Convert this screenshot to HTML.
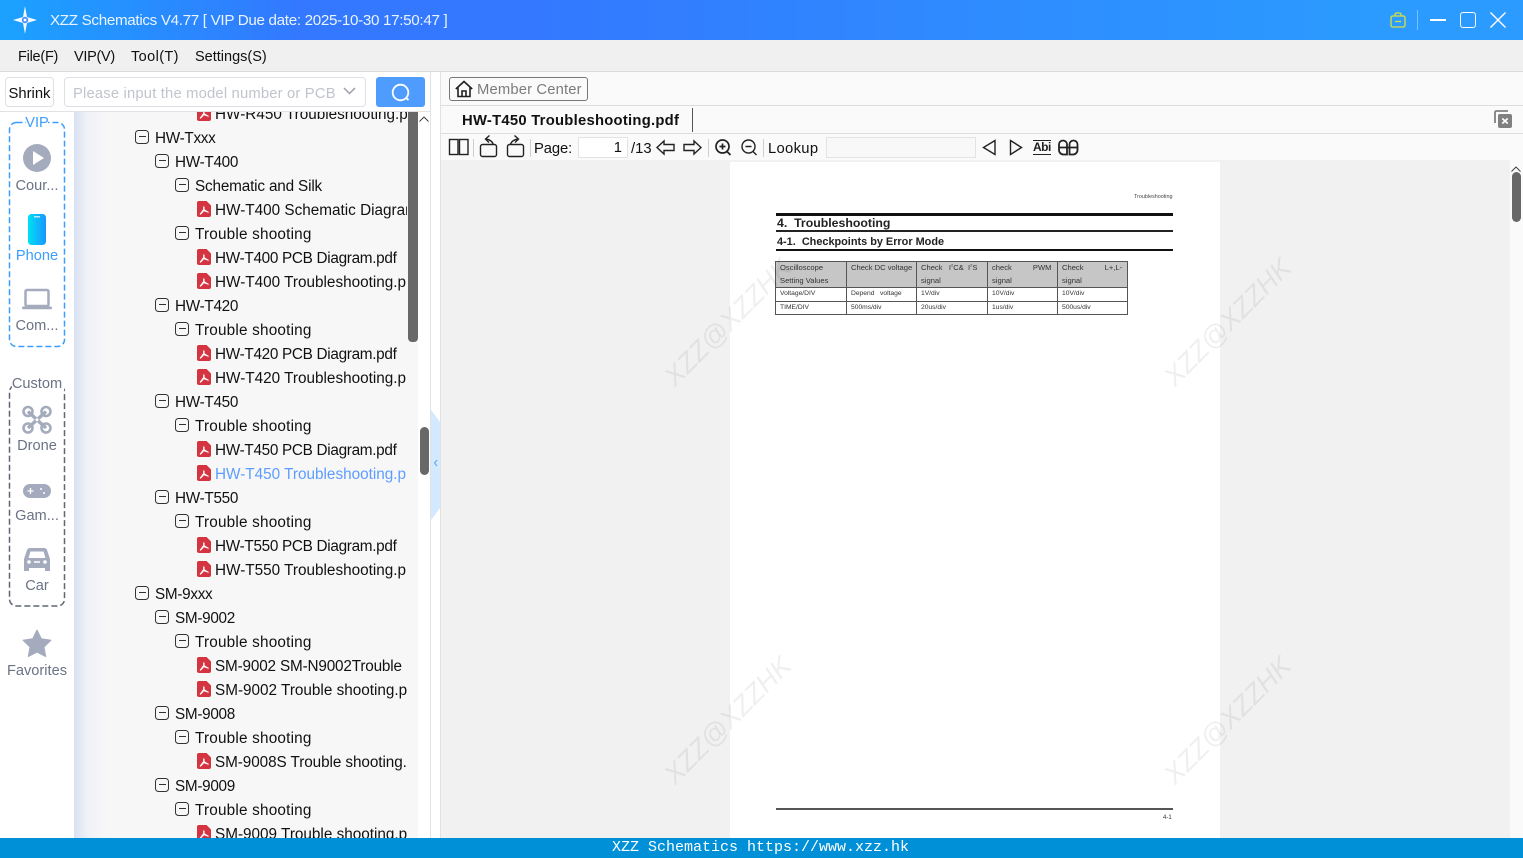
<!DOCTYPE html>
<html><head><meta charset="utf-8"><title>XZZ Schematics</title>
<style>
*{box-sizing:border-box}
html,body{margin:0;padding:0;width:1523px;height:858px;overflow:hidden;background:#fff;font-family:"Liberation Sans","Noto Sans CJK SC",sans-serif;color:#111}
.a{position:absolute;white-space:nowrap}
svg{position:absolute;overflow:visible}
#tree{position:absolute;left:74px;top:112px;width:344px;height:726px;background:linear-gradient(90deg,#d9e1f2 0,#f0f2f7 14px,#f7f7f7 34px);overflow:hidden}
.r{position:absolute;height:24px;line-height:24px;font-size:15.3px;white-space:nowrap;width:260px;overflow:hidden;color:#111;margin-top:2px;letter-spacing:-.3px}
.t{letter-spacing:.2px}
.s{letter-spacing:0}
.m{position:absolute;width:14px;height:14px;border:1.4px solid #333;border-radius:3.5px}
.m:after{content:"";position:absolute;left:2.5px;right:2.5px;top:5px;height:1.4px;background:#333}
.p{position:absolute;width:14px;height:16px;background:#d4343f;border-radius:2px;clip-path:polygon(0 0,68% 0,100% 28%,100% 100%,0 100%)}
.p:after{content:"";position:absolute;left:0;top:0;width:14px;height:16px;background:#fff;clip-path:polygon(18% 82%,44% 52%,44% 34%,54% 34%,54% 52%,84% 68%,82% 74%,50% 64%,26% 86%)}
.lab{position:absolute;width:74px;text-align:center;font-size:14.6px;color:#6b7285;left:0;margin-top:2px}
.wm{position:absolute;font-size:27px;font-style:italic;color:#000;opacity:.06;transform:rotate(-45deg);white-space:nowrap;width:200px;text-align:center}
table{position:absolute;left:775px;top:261px;width:352px;height:53px;border-collapse:collapse;font-size:6.7px;color:#333;table-layout:fixed}
td{border:1px solid #555;padding:0 4px;line-height:12.5px;vertical-align:middle;white-space:nowrap}
tr.h td{background:#c6c6c6;font-size:7.6px}
.ic{stroke:#222;stroke-width:1.4;fill:none}
.sep{position:absolute;top:139px;width:1px;height:18px;background:#cfcfcf}
</style></head>
<body>
<!-- Title bar -->
<div class="a" style="left:0;top:0;width:1523px;height:40px;background:linear-gradient(90deg,#1ba2ff 0,#3378ff 300px,#3378ff 520px,#2b9bff 1370px)"></div>
<svg style="left:13px;top:6px" width="24" height="28" viewBox="0 0 24 28"><path fill="#fff" d="M12 0 14 11 24 14 14 17 12 28 10 17 0 14 10 11Z" opacity=".95"/><circle cx="12" cy="14" r="3.2" fill="#4a90ff"/><circle cx="12" cy="14" r="1.4" fill="#fff"/></svg>
<div class="a" style="left:50px;top:12px;font-size:15.2px;line-height:18px;color:#eaf4ff;letter-spacing:-.32px">XZZ Schematics V4.77 [ VIP Due date: 2025-10-30 17:50:47 ]</div>
<svg style="left:1390px;top:12px" width="16" height="16" viewBox="0 0 16 16"><path d="M1 5.500a1.500 1.500 0 0 1 1.500-1.500h11a1.500 1.500 0 0 1 1.500 1.500v8a1.500 1.500 0 0 1-1.500 1.500h-11a1.500 1.500 0 0 1-1.500-1.500zM5 4V2.500A1.500 1.500 0 0 1 6.500 1h3A1.500 1.500 0 0 1 11 2.500V4M5 9.500h6" fill="none" stroke="#d9e03a" stroke-width="1.300"/></svg>
<div class="a" style="left:1417px;top:10px;width:1px;height:20px;background:#7cc0ff"></div>
<div class="a" style="left:1430px;top:19px;width:16px;height:2px;background:#fff"></div>
<div class="a" style="left:1460px;top:12px;width:16px;height:16px;border:1.600px solid #fff;border-radius:3px"></div>
<svg style="left:1490px;top:12px" width="16" height="16" viewBox="0 0 16 16"><path d="M.5.500 15.500 15.500M15.500.500.500 15.500" stroke="#fff" stroke-width="1.400"/></svg>
<!-- Menu -->
<div class="a" style="left:0;top:40px;width:1523px;height:32px;background:#f0f0f0;border-bottom:1px solid #dcdcdc"></div>
<div class="a" style="left:18px;top:47px;font-size:14.500px;line-height:20px;letter-spacing:-.25px">File(F)</div>
<div class="a" style="left:74px;top:47px;font-size:14.500px;line-height:20px;letter-spacing:-.3px">VIP(V)</div>
<div class="a" style="left:131px;top:47px;font-size:14.500px;line-height:20px;letter-spacing:.4px">Tool(T)</div>
<div class="a" style="left:195px;top:47px;font-size:14.500px;line-height:20px">Settings(S)</div>
<!-- Left search row -->
<div class="a" style="left:0;top:72px;width:430px;height:40px;background:#fff;border-bottom:1px solid #e2e2e2"></div>
<div class="a" style="left:5px;top:77px;width:49px;height:30px;border:1px solid #dcdfe6;border-radius:4px;font-size:14.800px;line-height:32px;text-align:center">Shrink</div>
<div class="a" style="left:64px;top:77px;width:302px;height:30px;border:1px solid #dcdfe6;border-radius:4px;font-size:14.800px;line-height:32px;color:#c0c4cc;padding-left:8px;letter-spacing:.17px">Please input the model number or PCB</div>
<svg style="left:343px;top:87px" width="13" height="8" viewBox="0 0 13 8"><path d="M1 1 6.500 6.500 12 1" fill="none" stroke="#9a9fa8" stroke-width="1.500"/></svg>
<div class="a" style="left:376px;top:77px;width:49px;height:30px;background:#4f9cff;border-radius:3px"></div>
<svg style="left:391px;top:83px" width="20" height="19" viewBox="0 0 20 19"><circle cx="9.500" cy="9.500" r="7.800" fill="none" stroke="#fff" stroke-width="1.800"/><path d="M15 15l2.500 2" stroke="#fff" stroke-width="1.800"/></svg>
<!-- Sidebar -->
<svg style="left:0;top:112px" width="74" height="600" viewBox="0 0 74 600">
<rect x="9.500" y="10.500" width="55" height="224" rx="7" fill="none" stroke="#3a9dff" stroke-width="1.500" stroke-dasharray="6 3"/>
<rect x="9.500" y="273" width="55" height="221" rx="7" fill="none" stroke="#5f6675" stroke-width="1.500" stroke-dasharray="6 3"/>
<rect x="26" y="3" width="22" height="14" fill="#fff"/><rect x="12" y="264" width="52" height="15" fill="#fff"/>
<circle cx="37" cy="46" r="14" fill="#a4abbd"/><path d="M33 39 44 46 33 53Z" fill="#fff"/>
<defs><linearGradient id="ph" x1="0" x2="1" y1="0" y2="0"><stop offset="0" stop-color="#00e0f5"/><stop offset="1" stop-color="#1a95ff"/></linearGradient></defs>
<rect x="28" y="102" width="18" height="31" rx="3.500" fill="url(#ph)"/><rect x="34" y="104" width="6" height="1.500" fill="#fff" opacity=".7"/>
<rect x="25.500" y="178" width="23" height="16" rx="1.500" fill="none" stroke="#a4abbd" stroke-width="2.500"/><rect x="22" y="194.500" width="30" height="2.800" rx="1.400" fill="#a4abbd"/>
<g fill="none" stroke="#a4abbd"><circle cx="28" cy="299.500" r="4.500" stroke-width="2.600"/><circle cx="46" cy="299.500" r="4.500" stroke-width="2.600"/><circle cx="28" cy="316" r="4.500" stroke-width="2.600"/><circle cx="46" cy="316" r="4.500" stroke-width="2.600"/><path d="M28 299.500 46 316M46 299.500 28 316" stroke-width="3.400"/></g><circle cx="37" cy="307.800" r="1.500" fill="#fff"/>
<rect x="23" y="372" width="28" height="14" rx="7" fill="#a4abbd"/><path d="M27.500 379h6M30.500 376v6" stroke="#fff" stroke-width="1.300"/><circle cx="41" cy="377" r="1" fill="#fff"/><circle cx="44" cy="381" r="1" fill="#fff"/>
<g transform="translate(0,3)"><path d="M24 456v-12l3-9q1-2 3-2h14q2 0 3 2l3 9v12h-5v-3H29v3zM28.500 443h17l-2-6.500H30.500z" fill="#a4abbd" fill-rule="evenodd"/><path d="M34 447h6" stroke="#fff" stroke-width="1.500"/><circle cx="29" cy="447" r="1.800" fill="#fff"/><circle cx="45" cy="447" r="1.800" fill="#fff"/></g>
<path d="M37 518l4.300 8.800 9.700 1.400-7 6.800 1.700 9.600L37 540.100l-8.700 4.500 1.700-9.600-7-6.800 9.700-1.400z" fill="#a4abbd" stroke="#a4abbd" stroke-width="1" stroke-linejoin="round"/>
</svg>
<div class="lab" style="top:113px;color:#3a9dff">VIP</div>
<div class="lab" style="top:176px">Cour...</div>
<div class="lab" style="top:246px;color:#3a9dff">Phone</div>
<div class="lab" style="top:316px">Com...</div>
<div class="lab" style="top:374px">Custom</div>
<div class="lab" style="top:436px">Drone</div>
<div class="lab" style="top:506px">Gam...</div>
<div class="lab" style="top:576px">Car</div>
<div class="lab" style="top:661px">Favorites</div>
<!-- Tree -->
<div id="tree"></div>
<div class="a" style="left:74px;top:112px;width:344px;height:726px;overflow:hidden">
<div class="p" style="left:123px;top:-7px"></div><div class="r s" style="left:141px;top:-11px;width:192px">HW-R450 Troubleshooting.p</div>
<div class="m" style="left:61px;top:18px"></div><div class="r" style="left:81px;top:13px">HW-Txxx</div>
<div class="m" style="left:81px;top:42px"></div><div class="r" style="left:101px;top:37px">HW-T400</div>
<div class="m" style="left:101px;top:66px"></div><div class="r" style="left:121px;top:61px;letter-spacing:-.17px">Schematic and Silk</div>
<div class="p" style="left:123px;top:89px"></div><div class="r s" style="left:141px;top:85px;width:192px">HW-T400 Schematic Diagram</div>
<div class="m" style="left:101px;top:114px"></div><div class="r t" style="left:121px;top:109px">Trouble shooting</div>
<div class="p" style="left:123px;top:137px"></div><div class="r" style="left:141px;top:133px;width:192px">HW-T400 PCB Diagram.pdf</div>
<div class="p" style="left:123px;top:161px"></div><div class="r s" style="left:141px;top:157px;width:192px">HW-T400 Troubleshooting.p</div>
<div class="m" style="left:81px;top:186px"></div><div class="r" style="left:101px;top:181px">HW-T420</div>
<div class="m" style="left:101px;top:210px"></div><div class="r t" style="left:121px;top:205px">Trouble shooting</div>
<div class="p" style="left:123px;top:233px"></div><div class="r" style="left:141px;top:229px;width:192px">HW-T420 PCB Diagram.pdf</div>
<div class="p" style="left:123px;top:257px"></div><div class="r s" style="left:141px;top:253px;width:192px">HW-T420 Troubleshooting.p</div>
<div class="m" style="left:81px;top:282px"></div><div class="r" style="left:101px;top:277px">HW-T450</div>
<div class="m" style="left:101px;top:306px"></div><div class="r t" style="left:121px;top:301px">Trouble shooting</div>
<div class="p" style="left:123px;top:329px"></div><div class="r" style="left:141px;top:325px;width:192px">HW-T450 PCB Diagram.pdf</div>
<div class="p" style="left:123px;top:353px"></div><div class="r s" style="left:141px;top:349px;width:192px;color:#5d9dff">HW-T450 Troubleshooting.p</div>
<div class="m" style="left:81px;top:378px"></div><div class="r" style="left:101px;top:373px">HW-T550</div>
<div class="m" style="left:101px;top:402px"></div><div class="r t" style="left:121px;top:397px">Trouble shooting</div>
<div class="p" style="left:123px;top:425px"></div><div class="r" style="left:141px;top:421px;width:192px">HW-T550 PCB Diagram.pdf</div>
<div class="p" style="left:123px;top:449px"></div><div class="r s" style="left:141px;top:445px;width:192px">HW-T550 Troubleshooting.p</div>
<div class="m" style="left:61px;top:474px"></div><div class="r" style="left:81px;top:469px">SM-9xxx</div>
<div class="m" style="left:81px;top:498px"></div><div class="r" style="left:101px;top:493px">SM-9002</div>
<div class="m" style="left:101px;top:522px"></div><div class="r t" style="left:121px;top:517px">Trouble shooting</div>
<div class="p" style="left:123px;top:545px"></div><div class="r" style="left:141px;top:541px;width:192px;letter-spacing:-.17px">SM-9002 SM-N9002Trouble</div>
<div class="p" style="left:123px;top:569px"></div><div class="r s" style="left:141px;top:565px;width:192px">SM-9002 Trouble shooting.p</div>
<div class="m" style="left:81px;top:594px"></div><div class="r" style="left:101px;top:589px">SM-9008</div>
<div class="m" style="left:101px;top:618px"></div><div class="r t" style="left:121px;top:613px">Trouble shooting</div>
<div class="p" style="left:123px;top:641px"></div><div class="r" style="left:141px;top:637px;width:192px;letter-spacing:-.08px">SM-9008S Trouble shooting.</div>
<div class="m" style="left:81px;top:666px"></div><div class="r" style="left:101px;top:661px">SM-9009</div>
<div class="m" style="left:101px;top:690px"></div><div class="r t" style="left:121px;top:685px">Trouble shooting</div>
<div class="p" style="left:123px;top:713px"></div><div class="r s" style="left:141px;top:709px;width:192px">SM-9009 Trouble shooting.p</div>
</div>
<div class="a" style="left:408px;top:112px;width:10px;height:230px;background:#686868;border-radius:0 0 4px 4px"></div>
<div class="a" style="left:418px;top:112px;width:12px;height:726px;background:#fff"></div>
<svg style="left:419px;top:116px" width="10" height="6" viewBox="0 0 10 6"><path d="M.5 5.500 5 1 9.500 5.500" fill="none" stroke="#444"/></svg>
<div class="a" style="left:420px;top:427px;width:9px;height:48px;background:#686868;border-radius:5px"></div>
<div class="a" style="left:430px;top:72px;width:1px;height:766px;background:#e2e2e2"></div>
<svg style="left:431px;top:408px" width="9" height="114" viewBox="0 0 9 114"><path d="M0 2 9 14V100L0 112Z" fill="#d3e9ff"/><path d="M6 52 3.500 55 6 58" fill="none" stroke="#5aa8f5"/></svg>
<div class="a" style="left:440px;top:72px;width:1px;height:766px;background:#e2e2e2"></div>
<!-- Right header -->
<div class="a" style="left:441px;top:72px;width:1082px;height:88px;background:#fafafa"></div>
<div class="a" style="left:441px;top:105px;width:1082px;height:1px;background:#dedede"></div>
<div class="a" style="left:441px;top:133px;width:1082px;height:1px;background:#dedede"></div>
<div class="a" style="left:449px;top:77px;width:139px;height:24px;border:1px solid #777;border-radius:3px;font-size:14.800px;line-height:24px;color:#7c7c7c;padding-left:27px;letter-spacing:.15px">Member Center</div>
<svg style="left:455px;top:80px" width="18" height="18" viewBox="0 0 18 18"><path d="M.8 9 9 1.500 17.200 9M3 7.500V16.500H15V7.500M7 16.500V11H11V16.500" fill="none" stroke="#222" stroke-width="1.600"/></svg>
<div class="a" style="left:462px;top:111px;font-size:14.800px;line-height:20px;font-weight:bold;color:#111;letter-spacing:.26px">HW-T450 Troubleshooting.pdf</div>
<div class="a" style="left:692px;top:108px;width:1px;height:24px;background:#555"></div>
<svg style="left:1494px;top:110px" width="18" height="18" viewBox="0 0 18 18"><path d="M1 13V2.500A1.500 1.500 0 0 1 2.500 1H14" fill="none" stroke="#808080" stroke-width="1.800"/><rect x="4" y="4" width="14" height="14" rx="2" fill="#808080"/><path d="M8.300 8.500l5.400 5M13.700 8.500l-5.400 5" stroke="#fff" stroke-width="1.600"/></svg>
<!-- Toolbar -->
<svg style="left:441px;top:134px" width="700" height="26" viewBox="0 0 700 26">
<g class="ic"><rect x="8.500" y="5.500" width="8.500" height="15"/><rect x="18.500" y="5.500" width="8.500" height="15"/>
<rect x="39.500" y="10.500" width="16" height="12" rx="2"/><path d="M52 10Q51 6 45 5M48.500 1.500 44.500 5 48 8.500"/>
<rect x="66.500" y="10.500" width="16" height="12" rx="2"/><path d="M69.500 10Q71 6 77 5M73.500 1.500 77.500 5 74 8.500"/>
<path d="M216 13.500l7-6.500v3.500h10v6h-10V20z"/><path d="M260 13.500l-7-6.500v3.500h-10v6h10V20z"/>
<circle cx="281.500" cy="12.500" r="6.500" stroke-width="1.700"/><path d="M286 17.500l3.500 3.500M278.500 12.500h6M281.500 9.500v6" stroke-width="1.700"/>
<circle cx="307.500" cy="12.500" r="6.500"/><path d="M312 17.500l3.500 3.500M304.500 12.500h6"/>
<path d="M554 6.500 542.500 13.500 554 20.500zM569.500 6.500 580.500 13.500 569.500 20.500z"/>
<path d="M592 6.500H610M592 20.500H610" stroke-width="1.100"/>
<g stroke-width="1.800"><path d="M618 13V10.500a4 4 0 0 1 8 0V20.500h-3.500a4.500 4.500 0 0 1-4.500-4.500zM636.500 13V10.500a4 4 0 0 0-8 0V20.500h3.500a4.500 4.500 0 0 0 4.500-4.500zM618 13.500h18.500"/></g>
</g></svg>
<div class="a" style="left:1033px;top:141px;font-size:12px;line-height:13px;letter-spacing:-.5px;color:#222;font-weight:bold">Abi</div>
<div class="sep" style="left:473px"></div><div class="sep" style="left:530px"></div><div class="sep" style="left:708px"></div><div class="sep" style="left:763px"></div>
<div class="a" style="left:534px;top:139px;font-size:14.800px;line-height:20px;color:#111;letter-spacing:-.1px">Page:</div>
<div class="a" style="left:578px;top:137px;width:50px;height:21px;background:#fff;border:1px solid #e3e3e3;font-size:14.800px;line-height:21px;text-align:right;padding-right:5px;color:#111">1</div>
<div class="a" style="left:631px;top:139px;font-size:14.800px;line-height:20px;color:#111">/13</div>
<div class="a" style="left:768px;top:139px;font-size:14.800px;line-height:20px;color:#111;letter-spacing:.3px">Lookup</div>
<div class="a" style="left:826px;top:137px;width:150px;height:21px;background:#f8f8f8;border:1px solid #e3e3e3"></div>
<!-- PDF view -->
<div class="a" style="left:441px;top:160px;width:1069px;height:678px;background:#f1f1f1"></div>
<div class="a" style="left:730px;top:162px;width:490px;height:676px;background:#fff"></div>
<div class="a" style="left:1134px;top:194px;font-size:5.400px;line-height:7px;color:#444">Troubleshooting</div>
<div class="a" style="left:776px;top:213px;width:397px;height:2.500px;background:#111"></div>
<div class="a" style="left:777px;top:216px;font-size:12.300px;line-height:15px;font-weight:bold;color:#222">4.&nbsp; Troubleshooting</div>
<div class="a" style="left:776px;top:230px;width:397px;height:1.500px;background:#222"></div>
<div class="a" style="left:777px;top:236px;font-size:10.900px;line-height:13px;font-weight:bold;color:#222">4-1.&nbsp; Checkpoints by Error Mode</div>
<div class="a" style="left:776px;top:249px;width:397px;height:1.500px;background:#111"></div>
<table style="width:351px">
<colgroup><col style="width:71px"><col style="width:70px"><col style="width:71px"><col style="width:70px"><col style="width:70px"></colgroup>
<tr class="h"><td style="height:26px">Oscilloscope<br>Setting Values</td><td style="vertical-align:top">Check DC voltage</td><td>Check &nbsp;&nbsp;I<sup style="font-size:4px;line-height:0">2</sup>C&amp; &nbsp;I<sup style="font-size:4px;line-height:0">2</sup>S<br>signal</td><td>check &nbsp;&nbsp;&nbsp;&nbsp;&nbsp;&nbsp;&nbsp;&nbsp;&nbsp;PWM<br>signal</td><td>Check &nbsp;&nbsp;&nbsp;&nbsp;&nbsp;&nbsp;&nbsp;&nbsp;&nbsp;L+,L-<br>signal</td></tr>
<tr><td style="height:13px">Voltage/DIV</td><td>Depend &nbsp;&nbsp;voltage</td><td>1V/div</td><td>10V/div</td><td>10V/div</td></tr>
<tr><td style="height:13px">TIME/DIV</td><td>500ms/div</td><td>20us/div</td><td>1us/div</td><td>500us/div</td></tr>
</table>
<div class="a" style="left:776px;top:808px;width:397px;height:2px;background:#555"></div>
<div class="a" style="left:1163px;top:815px;font-size:6px;line-height:7px;color:#333">4-1</div>
<div class="wm" style="left:628px;top:307px">XZZ@XZZHK</div>
<div class="wm" style="left:1128px;top:307px">XZZ@XZZHK</div>
<div class="wm" style="left:628px;top:705px">XZZ@XZZHK</div>
<div class="wm" style="left:1128px;top:705px">XZZ@XZZHK</div>
<!-- Right scrollbar -->
<div class="a" style="left:1510px;top:160px;width:13px;height:678px;background:#fafafa"></div>
<svg style="left:1511px;top:166px" width="10" height="6" viewBox="0 0 10 6"><path d="M.5 5.500 5 1 9.500 5.500" fill="none" stroke="#444"/></svg>
<div class="a" style="left:1512px;top:172px;width:9px;height:50px;background:#686868;border-radius:5px"></div>
<!-- Status bar -->
<div class="a" style="left:0;top:838px;width:1523px;height:20px;background:#0090d8"></div>
<div class="a" style="left:612px;top:838px;font-family:'Liberation Mono',monospace;font-size:15px;line-height:19px;color:#fff">XZZ Schematics https://www.xzz.hk</div>
</body></html>
